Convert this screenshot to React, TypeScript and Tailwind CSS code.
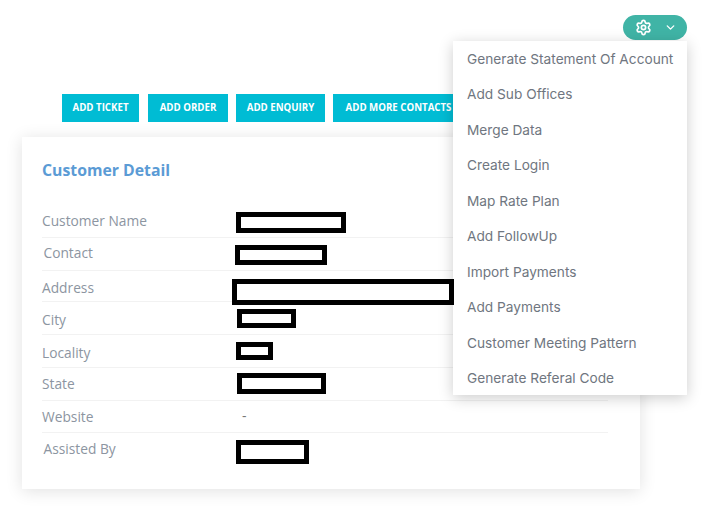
import { Settings, ChevronDown } from 'lucide-react';

const actions = [
  { label: 'ADD TICKET', width: 'w-[77px]' },
  { label: 'ADD ORDER', width: 'ml-[9px] w-[80px]' },
  { label: 'ADD ENQUIRY', width: 'ml-[8px] w-[89px]' },
  { label: 'ADD MORE CONTACTS', width: 'ml-[8px] w-[131px]' },
];

const menuItems = [
  'Generate Statement Of Account',
  'Add Sub Offices',
  'Merge Data',
  'Create Login',
  'Map Rate Plan',
  'Add FollowUp',
  'Import Payments',
  'Add Payments',
  'Customer Meeting Pattern',
  'Generate Referal Code',
];

const rows = [
  { label: 'Customer Name', row: 'h-[33px]', text: 'mt-[6px] w-[194px]', box: 'mt-[7px] w-[110px] h-[21px]' },
  { label: 'Contact', row: 'h-[33px]', text: 'mt-[5px] w-[193px] pl-[1.5px]', box: 'mt-[7px] w-[92px] h-[20px]' },
  { label: 'Address', row: 'h-[31px]', text: 'mt-[7px] w-[190px]', box: 'relative z-20 mt-[8px] w-[222px] h-[26px]' },
  { label: 'City', row: 'h-[33px]', text: 'mt-[8px] w-[195px]', box: 'mt-[7px] w-[59px] h-[19px]' },
  { label: 'Locality', row: 'h-[33px]', text: 'mt-[8px] w-[194px]', box: 'mt-[7px] w-[37px] h-[18px]' },
  { label: 'State', row: 'h-[33px]', text: 'mt-[6px] w-[195px]', box: 'mt-[5px] w-[89px] h-[21px]' },
  { label: 'Website', row: 'h-[32px]', text: 'mt-[6px] w-[200px]', value: '-' },
  { label: 'Assisted By', row: 'h-[33px] border-b-0', text: 'mt-[6px] w-[194px] pl-[1.5px]', box: 'mt-[7px] w-[73px] h-[24px]' },
];

export default function App() {
  return (
    <div className="relative h-[518px] w-[704px] overflow-hidden bg-white font-['Open_Sans',sans-serif]">
      <div className="flex justify-end pr-[17px] pt-[15px]">
        <button className="flex h-[25px] w-[64px] items-center rounded-full bg-[#40b4a6] pl-[12px] text-white">
          <Settings className="h-[17px] w-[17px]" strokeWidth={2.4} />
          <ChevronDown className="ml-[12px] h-[13px] w-[13px]" strokeWidth={2.5} />
        </button>
      </div>

      <div className="ml-[62px] mt-[54px] flex">
        {actions.map((a) => (
          <button
            key={a.label}
            className={`h-[28px] shrink-0 whitespace-nowrap bg-[#00bcd4] text-[9.7px] font-bold text-white ${a.width}`}
          >
            {a.label}
          </button>
        ))}
      </div>

      <div className="ml-[22px] mt-[15px] h-[352px] w-[618px] bg-white px-[20px] pt-[21px] shadow-[0_2px_16px_rgba(0,0,0,0.12)]">
        <h2 className="h-[47px] text-[15.8px] font-bold leading-[24px] text-[#5b9bd5]">Customer Detail</h2>
        <div className="w-[566px]">
          {rows.map((r) => (
            <div key={r.label} className={`flex items-start border-b border-[#f2f2f2] ${r.row}`}>
              <span className={`shrink-0 text-[13.75px] leading-[20px] text-[#8c95a1] ${r.text}`}>{r.label}</span>
              {r.value ? (
                <span className="mt-[5px] text-[14px] leading-[20px] text-[#777]">{r.value}</span>
              ) : (
                <div className={`shrink-0 border-[5px] border-black bg-white ${r.box}`} />
              )}
            </div>
          ))}
        </div>
      </div>

      <div className="absolute left-[453px] top-[41px] z-10 h-[354px] w-[234px] bg-white shadow-[0_3px_14px_rgba(0,0,0,0.2)]">
        {menuItems.map((m) => (
          <div
            key={m}
            className="flex h-[35.55px] -translate-y-[0.5px] items-center whitespace-nowrap pl-[14px] font-['Inter',sans-serif] text-[13.7px] text-[#6f7680]"
          >
            {m}
          </div>
        ))}
      </div>
    </div>
  );
}
